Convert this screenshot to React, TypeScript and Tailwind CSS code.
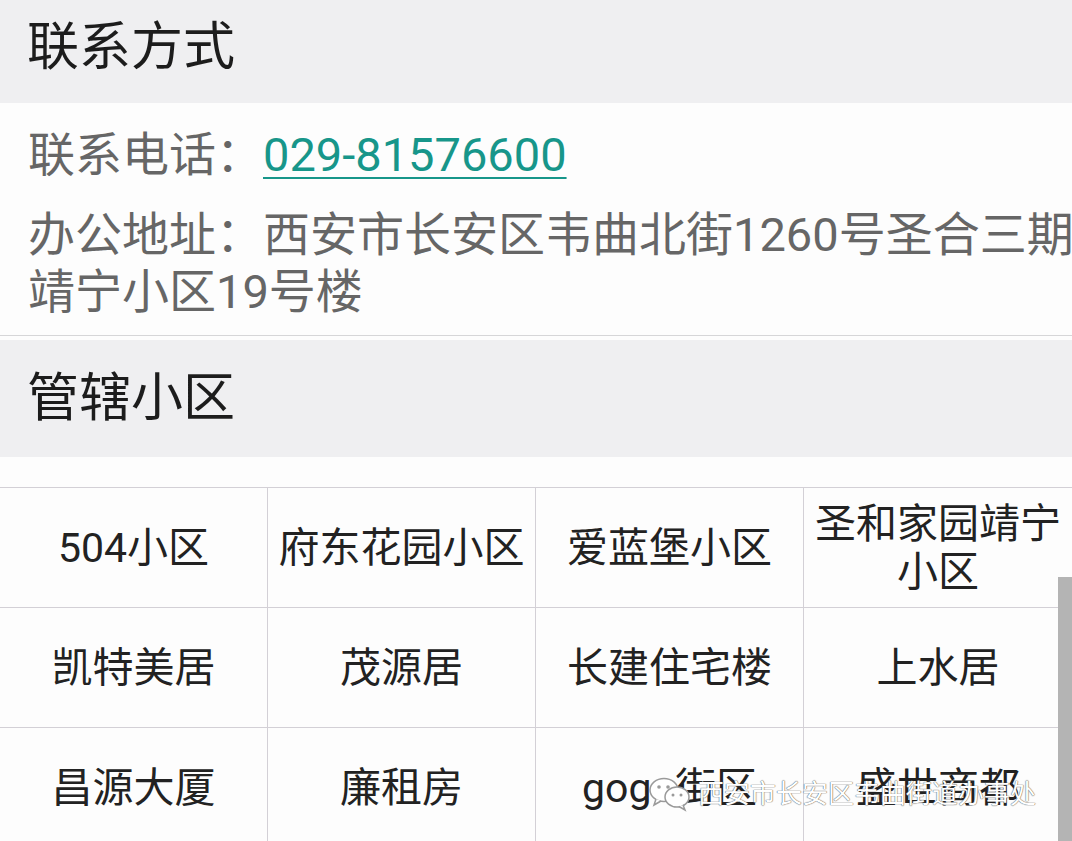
import React from 'react';

const font = "font-['Roboto','Noto_Sans_CJK_SC',sans-serif]";

const areas: string[] = [
    '504小区',
    '府东花园小区',
    '爱蓝堡小区',
    '圣和家园靖宁小区',
    '凯特美居',
    '茂源居',
    '长建住宅楼',
    '上水居',
    '昌源大厦',
    '廉租房',
    'gogo街区',
    '盛世商都',
];

const SectionTitle: React.FC<{ title: string; className?: string }> = ({ title, className = '' }) => (
    <div className={`bg-[#efeff1] flex items-center pl-[27px] ${className}`}>
        <h2 className="text-[52px] leading-none text-[#1c1c1c] font-normal">{title}</h2>
    </div>
);

const WeChatMark: React.FC = () => (
    <svg width="44" height="36" viewBox="0 0 44 36" fill="none">
        <ellipse cx="16" cy="14" rx="14" ry="11.5" fill="#fff" stroke="#9a9a9a" strokeWidth="1.5" />
        <path d="M8 23 L6 29 L13 25" fill="#fff" stroke="#9a9a9a" strokeWidth="1.5" />
        <ellipse cx="29" cy="21" rx="12" ry="10" fill="#fff" stroke="#9a9a9a" strokeWidth="1.5" />
        <path d="M35 29 L37 34 L31 30.5" fill="#fff" stroke="#9a9a9a" strokeWidth="1.5" />
        <circle cx="11" cy="11" r="1.8" fill="#9a9a9a" />
        <circle cx="20" cy="11" r="1.8" fill="#9a9a9a" />
        <circle cx="25" cy="19" r="1.5" fill="#9a9a9a" />
        <circle cx="33" cy="19" r="1.5" fill="#9a9a9a" />
    </svg>
);

export default function App() {
    return (
        <div className={`relative w-full h-[841px] overflow-hidden bg-[#fdfdfd] ${font}`}>
            <SectionTitle title="联系方式" className="h-[103px] pb-[8px]" />

            <div className="bg-[#fdfdfd] pl-[28px] pt-[23px] pb-[15px] border-b border-[#d6d6d8] text-[47px] leading-[57px] text-[#666666]">
                <p className="whitespace-nowrap">
                    联系电话：
                    <a href="#" className="text-[#17968a] underline decoration-[2px] underline-offset-[6px]">
                        029-81576600
                    </a>
                </p>
                <p className="mt-[23px] whitespace-nowrap">
                    办公地址：西安市长安区韦曲北街1260号圣合三期
                    <br />
                    靖宁小区19号楼
                </p>
            </div>

            <SectionTitle title="管辖小区" className="h-[117px] mt-[4px]" />

            <div className="mt-[30px] grid grid-cols-4 border-t border-[#d3d0d6]">
                {areas.map((name, i) => (
                    <div
                        key={name}
                        className={`h-[120px] flex items-center justify-center text-center border-b border-[#d3d0d6] ${
                            i % 4 !== 3 ? 'border-r' : ''
                        }`}
                    >
                        <span className="text-[41px] leading-[48px] text-[#222222]">{name}</span>
                    </div>
                ))}
            </div>

            {/* scrollbar */}
            <div className="absolute right-0 top-[577px] w-[14px] h-[280px] bg-[#b4b4b4]" />

            {/* watermark */}
            <div className="absolute left-[648px] top-[776px] flex items-center gap-[6px]">
                <WeChatMark />
                <span className="text-[26px] leading-none text-white [text-shadow:0_0_1px_#555,0_0_1px_#555]">
                    西安市长安区韦曲街道办事处
                </span>
            </div>
        </div>
    );
}
